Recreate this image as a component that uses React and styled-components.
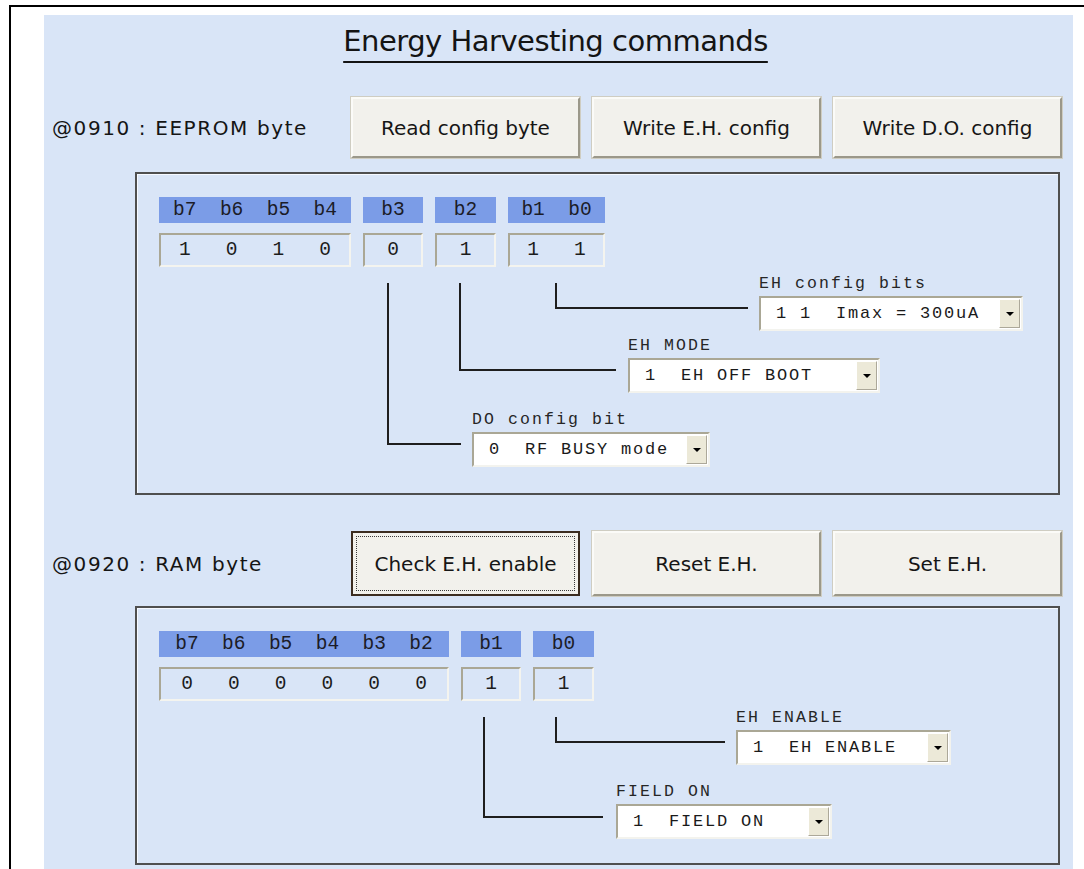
import React from 'react';
import styled, { createGlobalStyle } from 'styled-components';

const GlobalStyle = createGlobalStyle`
  html, body {
    margin: 0;
    padding: 0;
    background: #fff;
    overflow: hidden;
  }
  body {
    font-family: "DejaVu Sans", sans-serif;
  }
`;

// caption of the page above, only its descenders are in view
const Caption = styled.div`
  height: 5px;
  overflow: hidden;
  padding-left: 12px;
  white-space: nowrap;
`;

const CaptionText = styled.div`
  margin-top: -28px;
  font-family: "Liberation Sans", Arial, sans-serif;
  font-weight: bold;
  font-size: 27px;
  line-height: 27px;
  color: #000;
`;

const Frame = styled.div`
  margin-left: 9px;
  border-top: 2px solid #000;
  border-left: 2px solid #000;
  padding: 8px 0 0 33px;
  height: 854px;
`;

const Sheet = styled.div`
  width: 1029px;
  height: 854px;
  box-sizing: border-box;
  padding-top: 8px;
  background: #d9e5f7;
`;

const Title = styled.h1`
  margin: 0;
  padding-right: 6px;
  text-align: center;
  font-family: "DejaVu Sans", sans-serif;
  font-weight: 400;
  font-size: 29px;
  line-height: 36px;
  letter-spacing: -0.5px;
  color: #141414;
  text-decoration: underline;
  text-decoration-thickness: 2px;
  text-underline-offset: 10px;
  text-decoration-skip-ink: none;
`;

const CommandRow = styled.div`
  display: grid;
  grid-template-columns: 295px repeat(3, 229px);
  column-gap: 12px;
  height: ${p => p.$h}px;
  margin-top: ${p => p.$mt}px;
`;

const RowLabel = styled.div`
  align-self: center;
  padding-left: 8px;
  font-size: 20px;
  letter-spacing: 1.6px;
  color: #151515;
  white-space: nowrap;
`;

const Button = styled.button`
  height: 100%;
  padding: 0;
  font-family: "DejaVu Sans", sans-serif;
  font-size: 20px;
  color: #161616;
  background: #f2f1ec;
  border: 2px solid;
  border-color: #fbfbf8 #9b988a #9b988a #fbfbf8;
  box-shadow: 0 0 0 1px #cfcdc2;
  outline: ${p => (p.$focused ? '1px dotted #3a3a3a' : 'none')};
  outline-offset: -6px;
  ${p => p.$focused && `
    border-color: #3b2c20;
    box-shadow: none;
  `}
`;

const Panel = styled.div`
  position: relative;
  width: 925px;
  box-sizing: border-box;
  margin: ${p => p.$mt}px 0 0 91px;
  padding: 23px 0 ${p => p.$pb}px 22px;
  border: 2px solid #4f4f4f;
  box-shadow: inset 1px 1px 0 #f6f9ff;
`;

const BitRow = styled.div`
  display: flex;
  gap: 12px;
`;

const BitGroup = styled.div`
  display: flex;
  flex-direction: column;
  gap: 10px;
  width: ${p => p.$w}px;
`;

const BitHead = styled.div`
  height: 26px;
  background: #7b9ce7;
  display: flex;
  align-items: center;
  justify-content: center;
  font-family: "Liberation Mono", "Courier New", monospace;
  font-size: 19.5px;
  color: #1c1c28;
  white-space: pre;
`;

const BitValue = styled.div`
  height: 34px;
  box-sizing: border-box;
  border: 2px solid;
  border-color: #aaa795 #f4f4ef #f4f4ef #aaa795;
  display: flex;
  align-items: center;
  justify-content: center;
  font-family: "Liberation Mono", "Courier New", monospace;
  font-size: 19.5px;
  color: #1c1c1c;
  white-space: pre;
`;

const Wires = styled.svg`
  position: absolute;
  top: 0;
  left: 0;
  width: 100%;
  height: 100%;
  pointer-events: none;
`;

const Branch = styled.div`
  display: flex;
  flex-direction: column;
  align-items: flex-start;
  gap: 4px;
  margin: ${p => p.$mt}px 0 0 ${p => p.$ml}px;
`;

const BranchLabel = styled.div`
  height: 16px;
  line-height: 16px;
  font-family: "Liberation Mono", "Courier New", monospace;
  font-size: 16.5px;
  letter-spacing: 2.1px;
  color: #262626;
  white-space: pre;
`;

const Combo = styled.div`
  display: flex;
  width: ${p => p.$w}px;
  height: 35px;
  box-sizing: border-box;
  background: #fff;
  border: 2px solid;
  border-color: #aaa795 #f3f3ee #f3f3ee #aaa795;
`;

const ComboText = styled.span`
  flex: 1;
  display: flex;
  align-items: center;
  padding-left: 15px;
  font-family: "Liberation Mono", "Courier New", monospace;
  font-size: 17px;
  letter-spacing: 1.8px;
  color: #1a1a1a;
  white-space: pre;
`;

const ComboArrow = styled.span`
  width: 21px;
  margin: 1px 1px 1px 0;
  box-sizing: border-box;
  display: flex;
  align-items: center;
  justify-content: center;
  background: #ece9d8;
  border: 1px solid;
  border-color: #fff #aca899 #aca899 #fff;

  &::after {
    content: '';
    border-left: 4px solid transparent;
    border-right: 4px solid transparent;
    border-top: 4px solid #000;
  }
`;

function Select({ label, value, width, mt, ml }) {
  return (
    <Branch $mt={mt} $ml={ml}>
      <BranchLabel>{label}</BranchLabel>
      <Combo $w={width}>
        <ComboText>{value}</ComboText>
        <ComboArrow />
      </Combo>
    </Branch>
  );
}

function Bits({ groups }) {
  return (
    <BitRow>
      {groups.map(g => (
        <BitGroup key={g.head} $w={g.w}>
          <BitHead>{g.head}</BitHead>
          <BitValue>{g.value}</BitValue>
        </BitGroup>
      ))}
    </BitRow>
  );
}

const eepromBits = [
  { head: 'b7  b6  b5  b4', value: '1   0   1   0', w: 192 },
  { head: 'b3', value: '0', w: 60 },
  { head: 'b2', value: '1', w: 61 },
  { head: 'b1  b0', value: '1   1', w: 97 },
];

const ramBits = [
  { head: 'b7  b6  b5  b4  b3  b2', value: '0   0   0   0   0   0', w: 290 },
  { head: 'b1', value: '1', w: 60 },
  { head: 'b0', value: '1', w: 61 },
];

export default function App() {
  return (
    <>
      <GlobalStyle />
      <Caption>
        <CaptionText>Figure 105. Energy Harvesting commands</CaptionText>
      </Caption>
      <Frame>
        <Sheet>
          <Title>Energy Harvesting commands</Title>

          <CommandRow $h={61} $mt={38}>
            <RowLabel>@0910 : EEPROM byte</RowLabel>
            <Button>Read config byte</Button>
            <Button>Write E.H. config</Button>
            <Button>Write D.O. config</Button>
          </CommandRow>

          <Panel $mt={14} $pb={26}>
            <Wires>
              <g fill="none" stroke="#1e1e1e" strokeWidth="2" shapeRendering="crispEdges">
                <path d="M419 109 V134 H611" />
                <path d="M323 109 V196 H479" />
                <path d="M251 109 V270 H324" />
              </g>
            </Wires>
            <Bits groups={eepromBits} />
            <Select label="EH config bits" value="1 1  Imax = 300uA" width={264} mt={9} ml={600} />
            <Select label="EH MODE" value="1  EH OFF BOOT" width={252} mt={7} ml={469} />
            <Select label="DO config bit" value="0  RF BUSY mode" width={238} mt={19} ml={313} />
          </Panel>

          <CommandRow $h={65} $mt={36}>
            <RowLabel>@0920 : RAM byte</RowLabel>
            <Button $focused>Check E.H. enable</Button>
            <Button>Reset E.H.</Button>
            <Button>Set E.H.</Button>
          </CommandRow>

          <Panel $mt={10} $pb={24}>
            <Wires>
              <g fill="none" stroke="#1e1e1e" strokeWidth="2" shapeRendering="crispEdges">
                <path d="M419 109 V134 H588" />
                <path d="M347 109 V209 H466" />
              </g>
            </Wires>
            <Bits groups={ramBits} />
            <Select label="EH ENABLE" value="1  EH ENABLE" width={215} mt={9} ml={577} />
            <Select label="FIELD ON" value="1  FIELD ON" width={216} mt={19} ml={457} />
          </Panel>
        </Sheet>
      </Frame>
    </>
  );
}
